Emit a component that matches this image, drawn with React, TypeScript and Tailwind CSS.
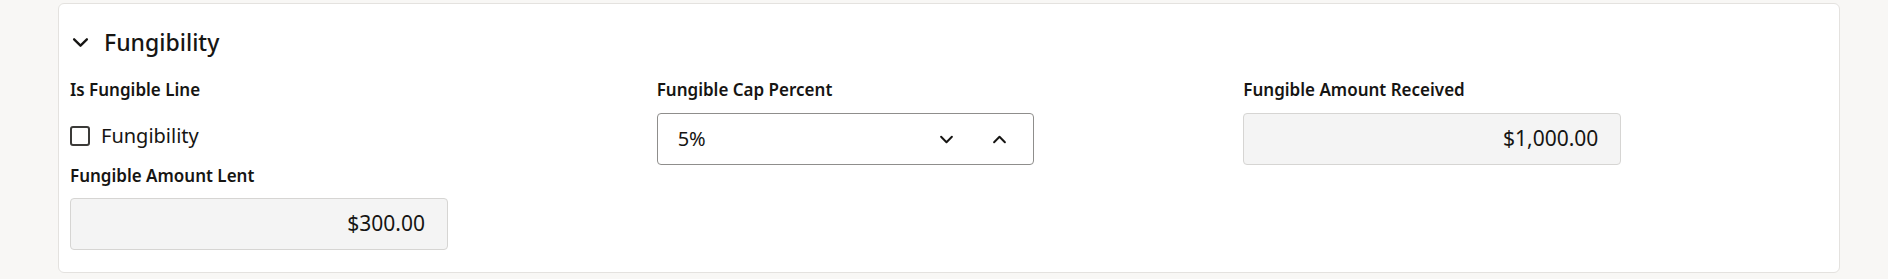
import React from "react";

const font = { fontFamily: '"Noto Sans", "Open Sans", sans-serif' };

const Chevron = ({ up = false, className = "" }: { up?: boolean; className?: string }) => (
  <svg viewBox="0 0 16 10" className={className} fill="none" stroke="currentColor" strokeWidth={2.2} strokeLinecap="round" strokeLinejoin="round">
    {up ? <path d="M2 8l6-6 6 6" /> : <path d="M2 2l6 6 6-6" />}
  </svg>
);

const Label = ({ children }: { children: React.ReactNode }) => (
  <div className="h-6 text-[17px] leading-6 font-semibold text-[#161513]">{children}</div>
);

const ReadOnlyBox = ({ value }: { value: string }) => (
  <div className="w-[378px] h-[52px] rounded-[4px] border border-[#d6d5d3] bg-[#f4f4f4] flex items-center justify-end pr-[22px] text-[21px] text-[#161513]">
    {value}
  </div>
);

export default function App() {
  return (
    <div className="min-h-screen bg-[#f8f7f5] pt-[3px] pl-[58px] pr-[48px]" style={font}>
      <div className="h-[270px] rounded-[6px] border border-[#e4e2df] bg-white pl-[11px] pt-[22px]">
        {/* section header */}
        <div className="flex items-center h-8 text-[#161513]">
          <Chevron className="w-[17px] h-[11px] ml-[2px]" />
          <span className="ml-[15px] text-[23px] font-medium">Fungibility</span>
        </div>

        <div className="grid grid-cols-3 w-[1760px] mt-5">
          <div className="flex flex-col">
            <Label>Is Fungible Line</Label>
            <label className="flex items-center h-8 mt-[18px]">
              <span className="w-5 h-5 rounded-[3px] border-2 border-[#3b3a38]" />
              <span className="ml-[11px] text-[20px] text-[#161513]">Fungibility</span>
            </label>
            <div className="mt-3">
              <Label>Fungible Amount Lent</Label>
            </div>
            <div className="mt-[10px]">
              <ReadOnlyBox value="$300.00" />
            </div>
          </div>

          <div className="flex flex-col">
            <Label>Fungible Cap Percent</Label>
            <div className="mt-[11px] w-[377px] h-[52px] rounded-[4px] border border-[#8f8e8c] bg-white flex items-center pl-[20px] pr-[26px] text-[#161513]">
              <span className="text-[20px] flex-1">5%</span>
              <Chevron className="w-[15px] h-[9px]" />
              <Chevron up className="w-[15px] h-[9px] ml-[38px]" />
            </div>
          </div>

          <div className="flex flex-col">
            <Label>Fungible Amount Received</Label>
            <div className="mt-[11px]">
              <ReadOnlyBox value="$1,000.00" />
            </div>
          </div>
        </div>
      </div>
    </div>
  );
}
